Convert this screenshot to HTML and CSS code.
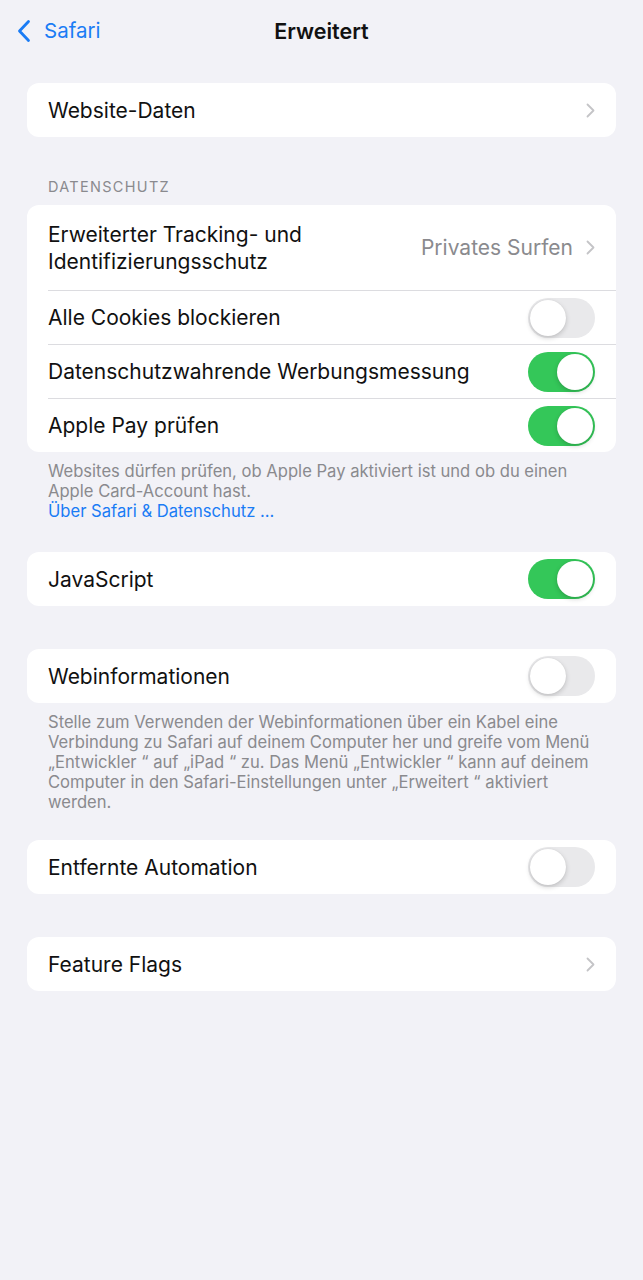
FILE: index.html
```html
<!DOCTYPE html>
<html lang="de">
<head>
    <meta charset="UTF-8">
    <meta name="viewport" content="width=device-width, initial-scale=1.0">
    <title>Erweitert</title>
    <link rel="stylesheet" href="styles.css">
</head>
<body>
    <div class="nav">
        <a class="back" href="#">
            <svg class="back-icon" width="16" height="24" viewBox="0 0 16 24">
                <path d="M12.5 2.5 L3.5 12 L12.5 21.5" fill="none" stroke="#1a7cf5" stroke-width="2.8" stroke-linecap="round" stroke-linejoin="round"/>
            </svg>
            <span>Safari</span>
        </a>
        <h1 class="nav-title">Erweitert</h1>
    </div>

    <div class="group first">
        <div class="row">
            <span class="label">Website-Daten</span>
            <svg class="chevron" width="9" height="15" viewBox="0 0 9 15"><path d="M1.5 1.5 L7.5 7.5 L1.5 13.5" fill="none" stroke="#c4c4c7" stroke-width="1.8" stroke-linecap="round" stroke-linejoin="round"/></svg>
        </div>
    </div>

    <div class="section-header">DATENSCHUTZ</div>
    <div class="group tight">
        <div class="row tall">
            <span class="label">Erweiterter Tracking- und<br>Identifizierungsschutz</span>
            <span class="value">Privates Surfen</span>
            <svg class="chevron" width="9" height="15" viewBox="0 0 9 15"><path d="M1.5 1.5 L7.5 7.5 L1.5 13.5" fill="none" stroke="#c4c4c7" stroke-width="1.8" stroke-linecap="round" stroke-linejoin="round"/></svg>
        </div>
        <div class="row">
            <span class="label">Alle Cookies blockieren</span>
            <span class="toggle"></span>
        </div>
        <div class="row">
            <span class="label">Datenschutzwahrende Werbungsmessung</span>
            <span class="toggle on"></span>
        </div>
        <div class="row">
            <span class="label">Apple Pay prüfen</span>
            <span class="toggle on"></span>
        </div>
    </div>
    <div class="footer">
        Websites dürfen prüfen, ob Apple Pay aktiviert ist und ob du einen<br>
        Apple Card-Account hast.<br>
        <a class="link" href="#">Über Safari &amp; Datenschutz ...</a>
    </div>

    <div class="group after-footer">
        <div class="row">
            <span class="label">JavaScript</span>
            <span class="toggle on"></span>
        </div>
    </div>

    <div class="group spaced">
        <div class="row">
            <span class="label">Webinformationen</span>
            <span class="toggle"></span>
        </div>
    </div>
    <div class="footer">
        Stelle zum Verwenden der Webinformationen über ein Kabel eine<br>
        Verbindung zu Safari auf deinem Computer her und greife vom Menü<br>
        „Entwickler “ auf „iPad “ zu. Das Menü „Entwickler “ kann auf deinem<br>
        Computer in den Safari-Einstellungen unter „Erweitert “ aktiviert<br>
        werden.
    </div>

    <div class="group after-footer2">
        <div class="row">
            <span class="label">Entfernte Automation</span>
            <span class="toggle"></span>
        </div>
    </div>

    <div class="group spaced">
        <div class="row">
            <span class="label">Feature Flags</span>
            <svg class="chevron" width="9" height="15" viewBox="0 0 9 15"><path d="M1.5 1.5 L7.5 7.5 L1.5 13.5" fill="none" stroke="#c4c4c7" stroke-width="1.8" stroke-linecap="round" stroke-linejoin="round"/></svg>
        </div>
    </div>
</body>
</html>
```

FILE: styles.css
```css
body {
    margin: 0;
    padding: 0;
    background-color: #f2f2f7;
    font-family: Inter, "Noto Sans", sans-serif;
    color: #111111;
    width: 643px;
    min-height: 1280px;
}

.nav {
    height: 62px;
    display: flex;
    align-items: center;
    justify-content: center;
    position: relative;
}

.back {
    position: absolute;
    left: 16px;
    top: 18px;
    display: flex;
    align-items: center;
    gap: 12px;
    color: #1a7cf5;
    text-decoration: none;
    font-size: 20.5px;
}

.nav-title {
    margin: 0;
    font-size: 21.5px;
    font-weight: 600;
}

.group {
    background-color: #ffffff;
    border-radius: 12px;
    margin: 0 27px;
    overflow: hidden;
}

.group.first {
    margin-top: 21px;
}

.group.tight {
    margin-top: 9px;
}

.group.after-footer {
    margin-top: 31px;
}

.group.after-footer2 {
    margin-top: 28px;
}

.group.spaced {
    margin-top: 43px;
}

.row {
    height: 54px;
    display: flex;
    align-items: center;
    margin-left: 21px;
    padding-right: 21px;
    border-top: 1px solid #dcdce0;
    box-sizing: border-box;
}

.row:first-child {
    border-top: none;
}

.row.tall {
    height: 85px;
}

.label {
    flex: 1;
    font-size: 21px;
    line-height: 27px;
}

.value {
    color: #8a8a8e;
    font-size: 21px;
    margin-right: 13px;
}

.chevron {
    display: block;
}

.toggle {
    width: 67px;
    height: 40px;
    border-radius: 20px;
    background-color: #e9e9eb;
    position: relative;
}

.toggle::after {
    content: "";
    position: absolute;
    top: 2px;
    left: 2px;
    width: 36px;
    height: 36px;
    border-radius: 50%;
    background-color: #ffffff;
    box-shadow: 0 2px 5px rgba(0, 0, 0, 0.18), 0 0 1px rgba(0, 0, 0, 0.1);
}

.toggle.on {
    background-color: #34c759;
}

.toggle.on::after {
    left: 29px;
}

.section-header {
    margin: 41px 0 0 48px;
    font-size: 14.5px;
    line-height: 18px;
    color: #8a8a8e;
    letter-spacing: 1.3px;
}

.footer {
    padding: 9px 0 0 48px;
    font-size: 16.6px;
    line-height: 20px;
    color: #8a8a8e;
    white-space: nowrap;
}

.link {
    color: #1a7cf5;
    text-decoration: none;
}
```
